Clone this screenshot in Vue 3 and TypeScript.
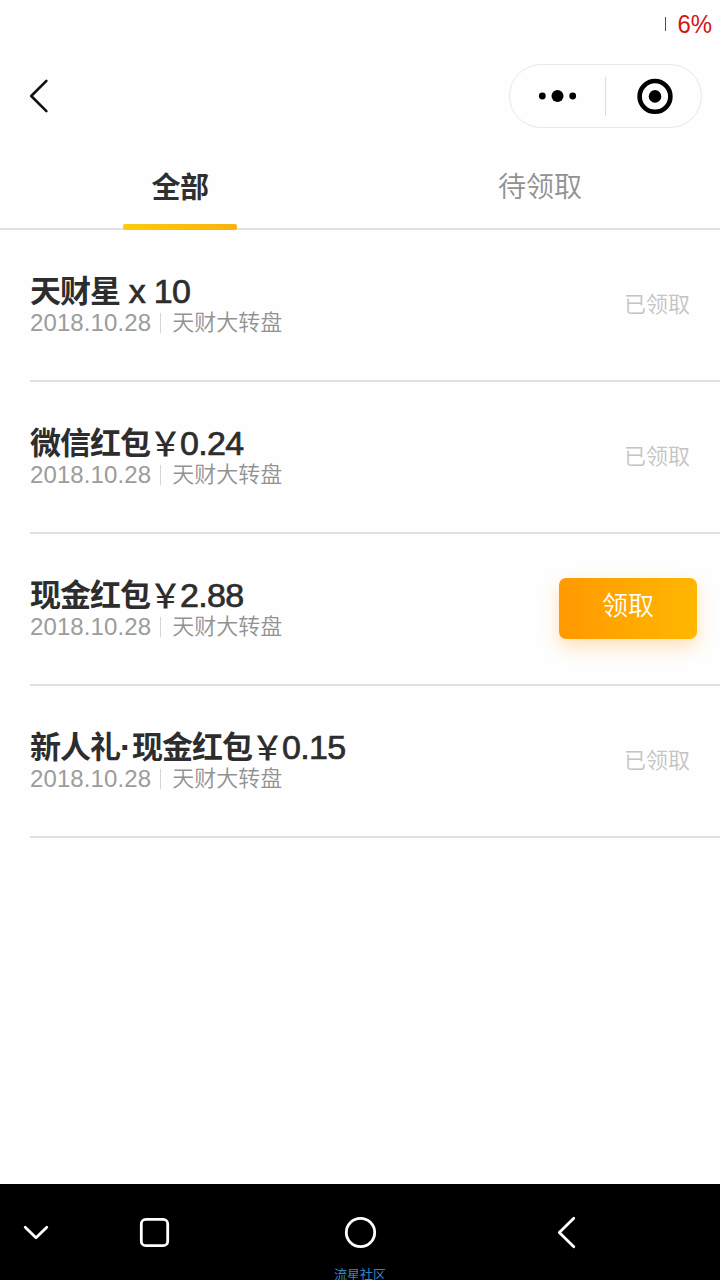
<script setup lang="ts">
import { ref } from 'vue'

interface Part {
  text: string
  kind: 'han' | 'latin' | 'yen' | 'dot'
}
interface Prize {
  id: number
  title: Part[]
  date: string
  source: string
  claimed: boolean
}

const han = (text: string): Part => ({ text, kind: 'han' })
const latin = (text: string): Part => ({ text, kind: 'latin' })
const yen: Part = { text: '￥', kind: 'yen' }
const dot: Part = { text: '·', kind: 'dot' }

const tabs = ['全部', '待领取']
const active = ref(0)

const prizes = ref<Prize[]>([
  { id: 1, title: [han('天财星'), latin(' x 10')], date: '2018.10.28', source: '天财大转盘', claimed: true },
  { id: 2, title: [han('微信红包'), yen, latin('0.24')], date: '2018.10.28', source: '天财大转盘', claimed: true },
  { id: 3, title: [han('现金红包'), yen, latin('2.88')], date: '2018.10.28', source: '天财大转盘', claimed: false },
  { id: 4, title: [han('新人礼'), dot, han('现金红包'), yen, latin('0.15')], date: '2018.10.28', source: '天财大转盘', claimed: true },
])
</script>

<template>
  <div class="screen">
    <div class="status"><i class="battery"></i><span class="percent">6%</span></div>

    <header class="nav">
      <svg class="back" width="24" height="40" viewBox="0 0 24 40">
        <path d="M19.4 4.8 L4.2 20 L19.4 35.2" fill="none" stroke="#111" stroke-width="2.6" stroke-linecap="round" stroke-linejoin="round" />
      </svg>
      <div class="capsule">
        <svg width="96" height="62" viewBox="0 0 96 62">
          <circle cx="32.3" cy="31" r="3.4" />
          <circle cx="47.5" cy="31" r="6" />
          <circle cx="62.7" cy="31" r="3.4" />
        </svg>
        <i class="split"></i>
        <svg width="95" height="62" viewBox="0 0 95 62">
          <circle cx="49" cy="31.4" r="15.4" fill="none" stroke="#000" stroke-width="4.6" />
          <circle cx="49" cy="31.4" r="6.3" />
        </svg>
      </div>
    </header>

    <nav class="tabs">
      <div v-for="(tab, i) in tabs" :key="tab" class="tab" :class="{ on: i === active }" @click="active = i">
        {{ tab }}
      </div>
    </nav>

    <main class="list">
      <div v-for="p in prizes" :key="p.id" class="row">
        <div class="info">
          <div class="title"><span v-for="(part, i) in p.title" :key="i" :class="part.kind">{{ part.text }}</span></div>
          <div class="meta"><span class="date">{{ p.date }}</span><i class="bar"></i><span class="source">{{ p.source }}</span></div>
        </div>
        <span v-if="p.claimed" class="done">已领取</span>
        <button v-else class="claim" @click="p.claimed = true">领取</button>
      </div>
    </main>

    <footer class="system">
      <svg class="keys" width="720" height="96" viewBox="0 0 720 96" fill="none" stroke="#fff" stroke-width="2.8" stroke-linecap="round" stroke-linejoin="round">
        <path d="M25.2 43.3 L36 53.8 L46.8 43.3" />
        <rect x="141.3" y="35.3" width="26.4" height="26.4" rx="4.5" />
        <circle cx="360.5" cy="48.5" r="14.2" />
        <path d="M573.8 34.2 L559.3 48.5 L573.8 62.8" />
      </svg>
      <span class="mark">流星社区</span>
    </footer>
  </div>
</template>

<style>
body {
  margin: 0;
  background: #fff;
}
</style>

<style scoped>
.screen {
  width: 720px;
  height: 1280px;
  display: flex;
  flex-direction: column;
  overflow: hidden;
  background: #fefefe;
  font-family: "Liberation Sans", "Noto Sans CJK SC", sans-serif;
}
.status {
  height: 48px;
  display: flex;
  align-items: center;
  justify-content: flex-end;
  gap: 8px;
  padding-right: 8px;
  box-sizing: border-box;
  color: #d71414;
  font-size: 26px;
  line-height: 48px;
}
.percent {
  width: 38px;
  text-align: right;
  transform: scaleX(0.92);
  transform-origin: right center;
}
.battery {
  width: 1px;
  height: 14px;
  background: #d71414;
}
.nav {
  height: 96px;
  display: flex;
  align-items: center;
  justify-content: space-between;
  padding: 0 18px 0 27px;
}
.capsule {
  width: 191px;
  height: 62px;
  display: flex;
  align-items: center;
  border: 1px solid #e8e8e8;
  border-radius: 32px;
}
.capsule svg {
  flex: none;
}
.capsule svg:first-child {
  margin-right: -1px;
}
.split {
  width: 1px;
  height: 39px;
  background: #dcdcdc;
}
.tabs {
  height: 84px;
  display: flex;
  border-bottom: 2px solid #e2e2e2;
}
.tab {
  flex: 1;
  position: relative;
  text-align: center;
  font-size: 28px;
  line-height: 88px;
  height: 84px;
  font-weight: 350;
  color: #919191;
}
.tab.on {
  font-size: 29px;
  letter-spacing: -0.5px;
  font-weight: 700;
  color: #2f2f2f;
}
.tab.on::after {
  content: "";
  position: absolute;
  left: 123px;
  bottom: -2px;
  width: 114px;
  height: 6px;
  border-radius: 2px;
  background: linear-gradient(90deg, #fccb0b, #fab30d);
}
.list {
  flex: 1;
}
.row {
  height: 150px;
  margin-left: 30px;
  display: flex;
  align-items: center;
  justify-content: space-between;
  border-bottom: 2px solid #e2e2e2;
}
.info {
  align-self: flex-start;
  height: 64px;
  margin-top: 44px;
}
.title {
  height: 34px;
  display: flex;
  align-items: center;
  line-height: 34px;
  color: #2d2d2d;
  white-space: pre;
}
.han {
  padding-bottom: 5px;
  font-family: "Noto Sans CJK SC", sans-serif;
  font-size: 31px;
  font-weight: 700;
  letter-spacing: -1px;
}
.latin {
  font-size: 34px;
  letter-spacing: -0.7px;
  -webkit-text-stroke: 0.7px #2d2d2d;
}
.yen {
  width: 30px;
  padding-bottom: 3px;
  font-family: "Noto Sans CJK SC", sans-serif;
  font-size: 33px;
  font-weight: 500;
  text-indent: -1px;
}
.dot {
  width: 12px;
  font-size: 34px;
  font-weight: 700;
}
.meta {
  height: 30px;
  display: flex;
  align-items: center;
  line-height: 30px;
  color: #929292;
}
.date {
  font-size: 24px;
  letter-spacing: 0.1px;
  color: #9c9c9c;
}
.bar {
  width: 1px;
  height: 20px;
  margin: 0 11px 0 9px;
  background: #d5d5d5;
}
.source {
  font-size: 22px;
  font-weight: 350;
}
.done {
  margin-right: 30px;
  padding-bottom: 7px;
  font-size: 22px;
  font-weight: 350;
  color: #c4c4c4;
}
.claim {
  width: 138px;
  height: 61px;
  margin: 0 23px 2px 0;
  padding: 0 0 5px;
  border: 0;
  border-radius: 7px;
  background: linear-gradient(90deg, #ff9900, #ffb700);
  box-shadow: 0 8px 18px rgba(255, 160, 30, 0.3);
  color: #fff;
  font-family: inherit;
  font-size: 26px;
  font-weight: 350;
  line-height: 56px;
}
.system {
  position: relative;
  height: 96px;
  background: #000;
  overflow: hidden;
}
.keys {
  display: block;
}
.mark {
  position: absolute;
  left: 334px;
  top: 82px;
  font-size: 13px;
  line-height: 18px;
  color: #2f86cf;
  white-space: nowrap;
}
</style>
